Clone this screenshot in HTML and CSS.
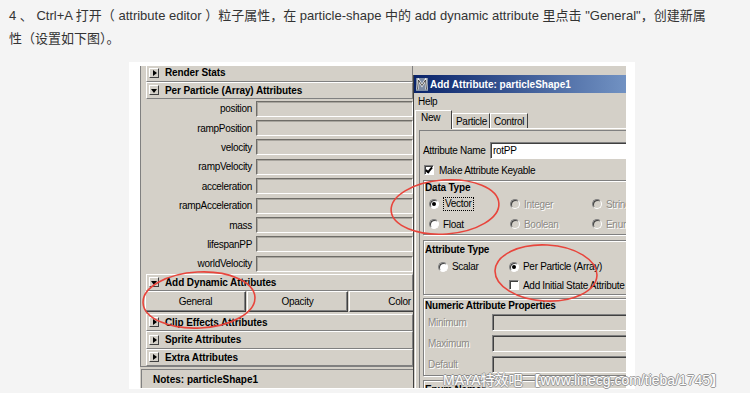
FILE: index.html
```html
<!DOCTYPE html>
<html lang="zh-CN">
<head>
    <meta charset="UTF-8">
    <meta name="viewport" content="width=device-width, initial-scale=1.0">
    <title>Add Attribute</title>
    <link rel="stylesheet" href="styles.css">
</head>
<body>
    <p class="post">4 、 Ctrl+A 打开（ attribute editor ）粒子属性，在 particle-shape 中的 add dynamic attribute 里点击 "General"，创建新属<br>性（设置如下图）。</p>

    <div class="shot">
        <div class="screen">

            <div class="editor">
                <div class="scroll">
                    <div class="frame first"><span class="arrow closed"></span>Render Stats</div>
                    <div class="frame"><span class="arrow open"></span>Per Particle (Array) Attributes</div>
                    <div class="attr-row"><span class="attr-label">position</span><span class="field"></span></div>
                    <div class="attr-row"><span class="attr-label">rampPosition</span><span class="field"></span></div>
                    <div class="attr-row"><span class="attr-label">velocity</span><span class="field"></span></div>
                    <div class="attr-row"><span class="attr-label">rampVelocity</span><span class="field"></span></div>
                    <div class="attr-row"><span class="attr-label">acceleration</span><span class="field"></span></div>
                    <div class="attr-row"><span class="attr-label">rampAcceleration</span><span class="field"></span></div>
                    <div class="attr-row"><span class="attr-label">mass</span><span class="field"></span></div>
                    <div class="attr-row"><span class="attr-label">lifespanPP</span><span class="field"></span></div>
                    <div class="attr-row"><span class="attr-label">worldVelocity</span><span class="field"></span></div>
                    <div class="frame"><span class="arrow open"></span>Add Dynamic Attributes</div>
                    <div class="btn-row">
                        <span class="btn">General</span>
                        <span class="btn">Opacity</span>
                        <span class="btn">Color</span>
                    </div>
                    <div class="frame gap"><span class="arrow closed"></span>Clip Effects Attributes</div>
                    <div class="frame"><span class="arrow closed"></span>Sprite Attributes</div>
                    <div class="frame"><span class="arrow closed"></span>Extra Attributes</div>
                </div>
                <div class="notes">Notes: particleShape1</div>
            </div>

            <div class="dialog">
                <div class="window">
                    <div class="titlebar">
                        <svg class="app-icon" width="12" height="13" viewBox="0 0 12 13">
                            <rect x="0" y="0" width="12" height="13" fill="#7d8ca3"/>
                            <polyline points="1.5,11.5 2.5,2 6,7.5 9.5,2 10.5,11.5" fill="none" stroke="#f2f2f2" stroke-width="2.2"/>
                            <polyline points="1.5,11.5 2.5,2 6,7.5 9.5,2 10.5,11.5" fill="none" stroke="#3b3b3b" stroke-width="0.9"/>
                        </svg>
                        Add Attribute: particleShape1
                    </div>
                    <div class="menubar">Help</div>
                    <div class="tabs">
                        <span class="tab active">New</span>
                        <span class="tab">Particle</span>
                        <span class="tab">Control</span>
                    </div>
                    <div class="tab-panel">
                        <div class="inner">
                            <div class="name-row">
                                <span class="name-label">Attribute Name</span>
                                <span class="input">rotPP</span>
                            </div>
                            <div class="check-row"><span class="check on"></span>Make Attribute Keyable</div>

                            <div class="group">
                                <div class="group-title">Data Type</div>
                                <div class="choice-grid data-type">
                                    <span class="choice"><span class="radio on"></span><span class="focus">Vector</span></span>
                                    <span class="choice off"><span class="radio"></span>Integer</span>
                                    <span class="choice off"><span class="radio"></span>String</span>
                                    <span class="choice"><span class="radio"></span>Float</span>
                                    <span class="choice off"><span class="radio"></span>Boolean</span>
                                    <span class="choice off"><span class="radio"></span>Enum</span>
                                </div>
                            </div>

                            <div class="group attr-type">
                                <div class="group-title tall">Attribute Type</div>
                                <div class="choice-grid kind">
                                    <span class="choice"><span class="radio"></span>Scalar</span>
                                    <span class="choice"><span class="radio on"></span>Per Particle (Array)</span>
                                    <span></span>
                                    <span class="choice"><span class="check"></span>Add Initial State Attribute</span>
                                </div>
                            </div>

                            <div class="group numeric">
                                <div class="group-title">Numeric Attribute Properties</div>
                                <div class="num-row"><span class="num-label">Minimum</span><span class="num-field"></span></div>
                                <div class="num-row"><span class="num-label">Maximum</span><span class="num-field"></span></div>
                                <div class="num-row"><span class="num-label">Default</span><span class="num-field"></span></div>
                            </div>

                            <div class="group enum">
                                <div class="group-title">Enum Names</div>
                            </div>
                        </div>
                    </div>
                </div>
            </div>

        </div>

        <!-- red marks drawn over the screenshot -->
        <svg class="marks" width="506" height="327" viewBox="0 0 506 327">
            <ellipse cx="316" cy="145" rx="54" ry="27" transform="rotate(-4 316 145)"/>
            <ellipse cx="417" cy="211" rx="51" ry="28" transform="rotate(3 417 211)"/>
            <ellipse cx="70" cy="238" rx="56" ry="28" transform="rotate(-3 70 238)"/>
        </svg>
        <div class="watermark">MAYA特效吧 【www.linecg.com/tieba/1745】</div>
    </div>
</body>
</html>
```

FILE: styles.css
```css
body {
    margin: 0;
    background: #f4f4f4;
    color: #333;
    font-family: "Liberation Sans", "Noto Sans CJK SC", sans-serif;
}

.post {
    margin: 0;
    padding: 4px 0 0 9px;
    font-size: 13px;
    line-height: 23px;
    white-space: nowrap;
}

.shot {
    position: relative;
    width: 486px;
    height: 322px;
    margin: 12px 0 0 129px;
    padding: 4px 9px 1px 11px;
    background: #fff;
}

.screen {
    display: flex;
    width: 486px;
    height: 322px;
    overflow: hidden;
    background: #d4d0c8;
    color: #000;
    font-size: 10px;
    letter-spacing: -0.3px;
    white-space: nowrap;
}

/* attribute editor */
.editor {
    width: 273px;
    flex: none;
    display: flex;
    flex-direction: column;
}
.scroll {
    height: 301px;
    overflow: hidden;
    box-sizing: border-box;
    border-left: 1px solid #808080;
    border-bottom: 1px solid #808080;
    padding-left: 5px;
}
.frame {
    display: flex;
    align-items: center;
    height: 17.5px;
    box-sizing: border-box;
    padding-left: 2px;
    border: 1px solid;
    border-color: #fff #808080 #808080 #fff;
    font-weight: bold;
    letter-spacing: -0.1px;
}
.frame.first {
    margin-top: -2px;
}
.frame.gap {
    margin-top: 1.5px;
}
.arrow {
    position: relative;
    width: 10px;
    height: 10px;
    margin-right: 6px;
    box-sizing: border-box;
    border: 1px solid;
    border-color: #fff #404040 #404040 #fff;
}
.arrow::after {
    content: "";
    position: absolute;
    width: 0;
    height: 0;
}
.arrow.closed::after {
    left: 3px;
    top: 1px;
    border-left: 4px solid #000;
    border-top: 3.5px solid transparent;
    border-bottom: 3.5px solid transparent;
}
.arrow.open::after {
    left: 1px;
    top: 3px;
    border-top: 4px solid #000;
    border-left: 3.5px solid transparent;
    border-right: 3.5px solid transparent;
}
.attr-row {
    display: flex;
    align-items: center;
    height: 19.4px;
}
.attr-label {
    width: 106px;
    margin-right: 4px;
    text-align: right;
}
.field {
    width: 157px;
    height: 16px;
    box-sizing: border-box;
    border: 1px solid;
    border-color: #6f6d68 #fff #fff #6f6d68;
    box-shadow: inset 1px 1px 0 #a8a59e;
}
.btn-row {
    display: flex;
    gap: 1px;
    height: 21px;
    margin-left: -1px;
}
.btn {
    flex: none;
    width: 101px;
    box-sizing: border-box;
    border: 1px solid;
    border-color: #fff #404040 #404040 #fff;
    box-shadow: inset -1px -1px 0 #808080;
    text-align: center;
    line-height: 19px;
}
.notes {
    height: 19px;
    margin: 2px 0 0 1px;
    box-sizing: border-box;
    border-top: 1px solid #808080;
    border-left: 1px solid #808080;
    padding-left: 11px;
    line-height: 19px;
    font-weight: bold;
    letter-spacing: 0;
}

/* add attribute dialog */
.dialog {
    width: 213px;
    flex: none;
    margin-top: 9px;
    box-sizing: border-box;
    border-left: 1px solid #404040;
    overflow: hidden;
}
.window {
    width: 320px;
}
.titlebar {
    display: flex;
    align-items: center;
    gap: 2px;
    height: 18px;
    padding-left: 2px;
    background: linear-gradient(90deg, #0a246a, #a6caf0);
    color: #fff;
    font-weight: bold;
    letter-spacing: 0;
}
.app-icon {
    flex: none;
}
.menubar {
    height: 17px;
    padding-left: 4px;
    line-height: 17px;
}
.tabs {
    display: flex;
    align-items: flex-end;
    height: 18px;
    padding-left: 1px;
}
.tab {
    width: 38px;
    height: 15px;
    box-sizing: border-box;
    padding-left: 3px;
    border: 1px solid;
    border-bottom: none;
    border-color: #fff #404040 transparent #fff;
    line-height: 15px;
}
.tab.active {
    position: relative;
    width: 37px;
    height: 19px;
    margin-bottom: -1px;
    padding-left: 5px;
    line-height: 14px;
    background: #d4d0c8;
}
.tab-panel {
    margin-left: 1px;
    padding: 1px 0 0 3px;
    border-top: 1px solid #fff;
    border-left: 1px solid #fff;
}
.inner {
    padding: 10px 0 0 3px;
    border-top: 1px solid #808080;
    border-left: 1px solid #808080;
}
.name-row {
    display: flex;
    align-items: center;
    height: 19px;
}
.name-label {
    width: 67px;
}
.input {
    width: 240px;
    height: 17px;
    box-sizing: border-box;
    padding-left: 2px;
    border: 1px solid;
    border-color: #808080 #fff #fff #808080;
    box-shadow: inset 1px 1px 0 #404040;
    background: #fff;
    line-height: 15px;
}
.check-row {
    display: flex;
    align-items: center;
    height: 20px;
    padding-left: 1px;
}
.check {
    position: relative;
    flex: none;
    width: 10px;
    height: 10px;
    margin-right: 5px;
    box-sizing: border-box;
    border: 1px solid;
    border-color: #808080 #fff #fff #808080;
    box-shadow: inset 1px 1px 0 #404040;
    background: #fff;
}
.check.on::after {
    content: "";
    position: absolute;
    left: 2px;
    top: 0px;
    width: 2px;
    height: 5px;
    border: solid #000;
    border-width: 0 2px 2px 0;
    transform: rotate(40deg);
}
.group {
    width: 300px;
    box-sizing: border-box;
    border: 1px solid #808080;
    box-shadow: inset 1px 1px 0 #fff, 1px 1px 0 #fff;
}
.group + .group {
    margin-top: 4px;
}
.group-title {
    height: 13px;
    padding-left: 1px;
    line-height: 13px;
    font-weight: bold;
    letter-spacing: -0.2px;
}
.group-title.tall {
    height: 16px;
    line-height: 17px;
}
.choice-grid {
    display: grid;
}
.choice-grid.data-type {
    grid-template-columns: 81px 82px auto;
    grid-auto-rows: 20px;
    padding-left: 5px;
}
.choice-grid.kind {
    grid-template-columns: 71px auto;
    grid-template-rows: 19px 18px;
    padding-left: 14px;
}
.choice {
    display: flex;
    align-items: center;
}
.choice .check {
    margin-right: 4px;
}
.choice.off {
    color: #8d8b86;
    text-shadow: 1px 1px 0 #fff;
}
.radio {
    position: relative;
    flex: none;
    width: 10px;
    height: 10px;
    margin-right: 4px;
    box-sizing: border-box;
    border-radius: 50%;
    border: 1px solid;
    border-color: #808080 #fff #fff #808080;
    box-shadow: inset 1px 1px 0 #404040;
    background: #fff;
}
.choice.off .radio {
    background: #d4d0c8;
}
.radio.on::after {
    content: "";
    position: absolute;
    left: 2px;
    top: 2px;
    width: 4px;
    height: 4px;
    border-radius: 50%;
    background: #000;
}
.focus {
    padding: 0 1px;
    border: 1px dotted #000;
    line-height: 12px;
}
.group.attr-type {
    margin-top: 5px;
}
.group.numeric {
    margin-top: 3px;
}
.num-row {
    display: flex;
    align-items: center;
    height: 21px;
    padding-left: 4px;
}
.num-label {
    width: 64px;
    color: #8d8b86;
    text-shadow: 1px 1px 0 #fff;
}
.num-field {
    width: 200px;
    height: 17px;
    box-sizing: border-box;
    border: 1px solid;
    border-color: #808080 #fff #fff #808080;
    box-shadow: inset 1px 1px 0 #404040;
}
.group.enum {
    height: 30px;
    padding-top: 2px;
}

/* overlays */
.marks {
    position: absolute;
    left: 0;
    top: 0;
    pointer-events: none;
}
.marks ellipse {
    fill: none;
    stroke: #e8453c;
    stroke-width: 1.6;
}
.watermark {
    position: absolute;
    left: 314px;
    top: 307px;
    white-space: nowrap;
    color: #fff;
    font-size: 14px;
    text-shadow: 1px 0 0 #9a9a9a, -1px 0 0 #9a9a9a, 0 1px 0 #9a9a9a, 0 -1px 0 #9a9a9a;
}
```
